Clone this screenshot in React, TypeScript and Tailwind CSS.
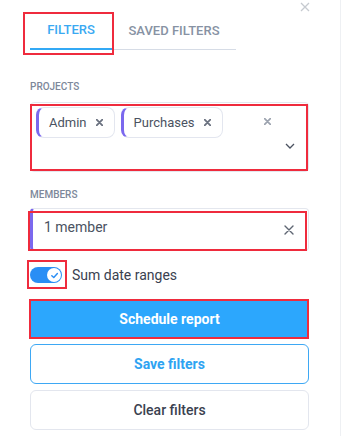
import React from 'react'

const RedBox = ({ className }: { className: string }) => (
  <span className={`pointer-events-none absolute border-2 border-[#ef2b3d] ${className}`} />
)

const SmallX = ({ color, size = 7, stroke = 2 }: { color: string; size?: number; stroke?: number }) => (
  <svg width={size} height={size} viewBox="0 0 10 10" className="shrink-0">
    <path d="M1 1L9 9M9 1L1 9" stroke={color} strokeWidth={stroke} strokeLinecap="round" />
  </svg>
)

function Chip({ label }: { label: string }) {
  return (
    <div className="flex h-[31px] items-center gap-[9px] rounded-[8px] border border-[#e3e6ef] border-l-[3px] border-l-[#7b68ee] pl-[10px] pr-[11px]">
      <span className="text-[13px] text-[#4a5261]">{label}</span>
      <SmallX color="#6b7280" size={7} stroke={2.6} />
    </div>
  )
}

export default function App() {
  return (
    <div
      className="relative h-[436px] w-[341px] overflow-hidden border-r border-[#eef0f3] bg-white"
      style={{ fontFamily: 'Roboto, "Liberation Sans", sans-serif' }}
    >
      {/* close */}
      <div className="absolute left-[300px] top-[2px]">
        <svg width="10" height="10" viewBox="0 0 10 10">
          <path d="M1 1L9 9M9 1L1 9" stroke="#c6cad0" strokeWidth="1.3" />
        </svg>
      </div>

      {/* tabs */}
      <div className="mt-[12px] pl-[30px]">
        <div className="flex w-[206px] border-b border-[#d6dce6]">
          <div className="relative -mb-px flex h-[38px] w-[82px] items-center justify-center border-b-2 border-[#33a9f5] text-[13px] font-medium text-[#3aa9f2]">
            FILTERS
            <RedBox className="-left-[7px] top-0 h-[43px] w-[91px]" />
          </div>
          <div className="flex h-[37px] w-[124px] items-center justify-center text-[13px] font-medium text-[#8792a3]">
            SAVED FILTERS
          </div>
        </div>
      </div>

      <div className="px-[30px] pr-[31px]">
        {/* projects */}
        <div className="mt-[31px] text-[10px] font-medium leading-[12px] text-[#7d889a]">PROJECTS</div>
        <div className="relative mt-[9px] flex h-[70px] rounded-[4px] border border-[#e4e7ee]">
          <div className="flex flex-1 flex-wrap items-start gap-[6px] pl-[5px] pt-[4px]">
            <Chip label="Admin" />
            <Chip label="Purchases" />
          </div>
          <div className="mt-[15px] self-start">
            <SmallX color="#9ca3af" size={7} stroke={2.4} />
          </div>
          <div className="mb-[22px] ml-[14px] mr-[13px] self-end">
            <svg width="10" height="6" viewBox="0 0 10 6">
              <path d="M1 1L5 5L9 1" stroke="#4b5260" strokeWidth="1.3" fill="none" />
            </svg>
          </div>
          <RedBox className="-left-px top-px right-0 bottom-0" />
        </div>

        {/* members */}
        <div className="mt-[17px] text-[10px] font-medium leading-[12px] text-[#7d889a]">MEMBERS</div>
        <div className="relative mt-[7px] flex h-[43px] items-center rounded-[4px] border border-[#e4e7ee] border-l-[3px] border-l-[#7b68ee] pl-[11px] pr-[14px]">
          <span className="flex-1 pb-[4px] text-[14px] text-[#4a5261]">1 member</span>
          <SmallX color="#5f6673" size={10} stroke={1.4} />
          <RedBox className="-left-[5px] top-[2px] right-px -bottom-px" />
        </div>

        {/* toggle */}
        <div className="mt-[16px] flex items-center gap-[10px] leading-[16px]">
          <div className="relative flex h-[16px] w-[32px] items-center justify-end rounded-full bg-[#2a8ef5] pr-px">
            <div className="flex h-[14px] w-[14px] items-center justify-center rounded-full bg-white">
              <svg width="9" height="9" viewBox="0 0 10 10">
                <path d="M2 5.2L4.2 7.3L8.2 2.8" stroke="#2a8ef5" strokeWidth="1.6" fill="none" strokeLinecap="round" strokeLinejoin="round" />
              </svg>
            </div>
            <RedBox className="-left-[3px] -top-[7px] h-[29px] w-[40px]" />
          </div>
          <span className="text-[14px] text-[#3a4150]">Sum date ranges</span>
        </div>

        {/* buttons */}
        <button className="relative mt-[16px] flex h-[40px] w-full items-center justify-center bg-[#2ca7fd] text-[14px] font-bold text-white">
          Schedule report
          <RedBox className="-left-px top-0 right-0 bottom-0" />
        </button>
        <button className="mt-[5px] flex h-[40px] w-full items-center justify-center rounded-[6px] border border-[#3ea8f4] text-[14px] font-bold text-[#2ea3f2]">
          Save filters
        </button>
        <button className="mt-[6px] flex h-[40px] w-full items-center justify-center rounded-[6px] border border-[#e3e6ee] text-[14px] font-medium text-[#3a4150]">
          Clear filters
        </button>
      </div>
    </div>
  )
}
